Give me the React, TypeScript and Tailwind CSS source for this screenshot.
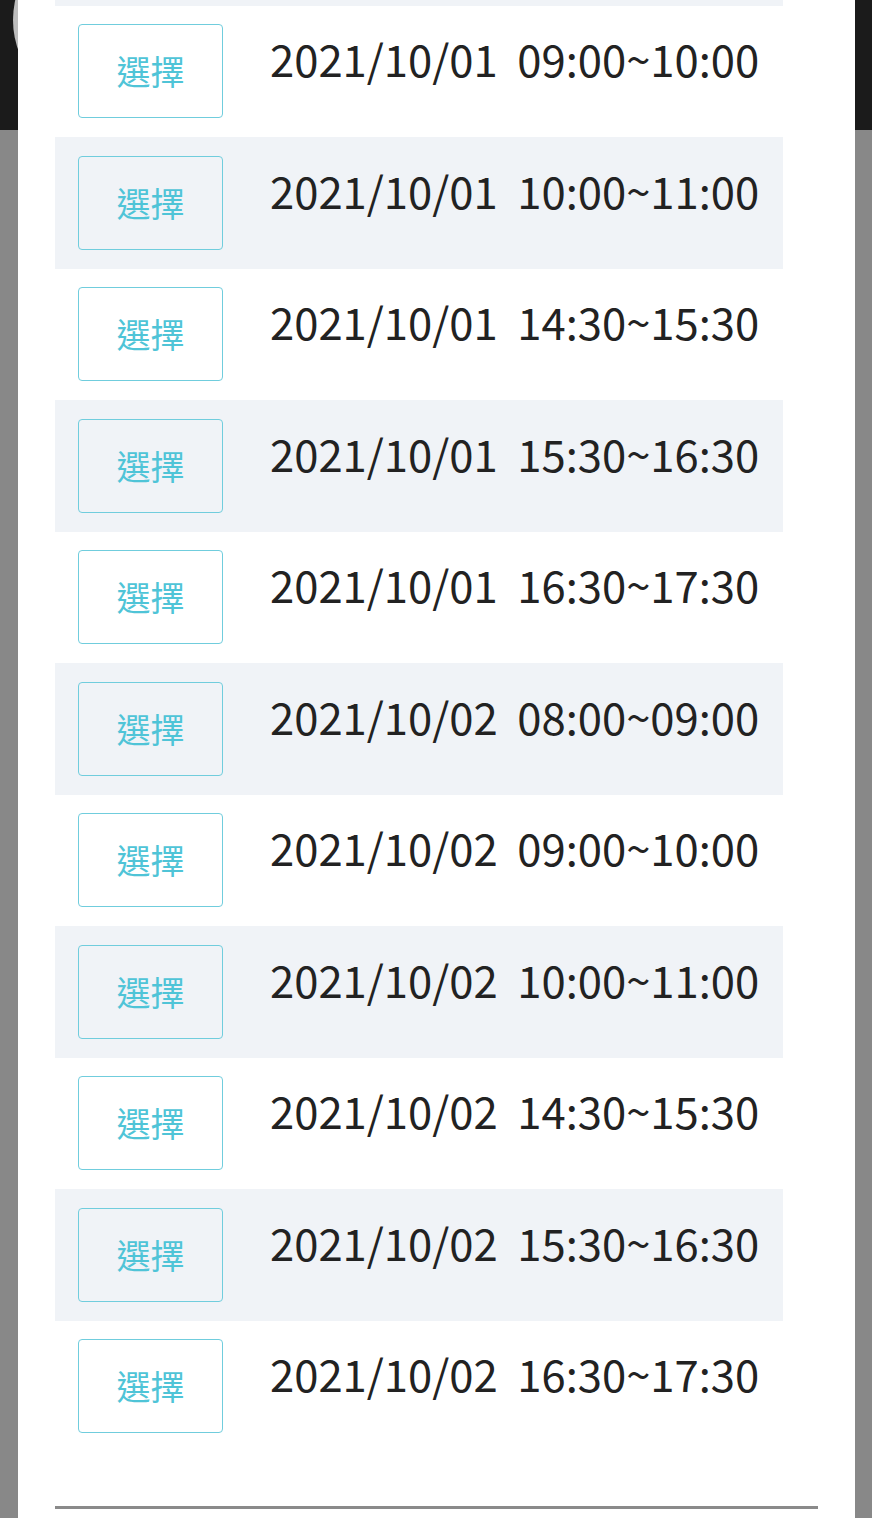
const slots = [
  "2021/10/01  09:00~10:00",
  "2021/10/01  10:00~11:00",
  "2021/10/01  14:30~15:30",
  "2021/10/01  15:30~16:30",
  "2021/10/01  16:30~17:30",
  "2021/10/02  08:00~09:00",
  "2021/10/02  09:00~10:00",
  "2021/10/02  10:00~11:00",
  "2021/10/02  14:30~15:30",
  "2021/10/02  15:30~16:30",
  "2021/10/02  16:30~17:30",
];

const SlotRow = ({ label, shaded }: { label: string; shaded: boolean }) => (
  <li className={`flex items-start h-[131.5px] pt-[18.5px] pl-[23px] ${shaded ? "bg-[#f0f3f7]" : "bg-white"}`}>
    <button
      type="button"
      className="w-[145px] h-[94px] shrink-0 flex items-center justify-center rounded-[4px] border-[1.5px] border-[#70cddd] text-[34px] text-[#4fc4d7] leading-none"
    >
      選擇
    </button>
    <span className="ml-[47px] mt-[2px] whitespace-pre text-[43.6px] text-[#222222]">{label}</span>
  </li>
);

export default function App() {
  return (
    <div
      className="relative w-[872px] h-[1518px] overflow-hidden bg-[#888888]"
      style={{ fontFamily: '"Noto Sans CJK TC", "Noto Sans", sans-serif' }}
    >
      {/* header behind the overlay */}
      <div className="h-[130px] bg-[#1b1b1b]" />
      <div className="absolute left-[13px] top-[-70px] w-[220px] h-[180px] rounded-full bg-[#bdbdbd]" />

      {/* modal */}
      <div className="absolute left-[18px] top-0 w-[837px] h-[1518px] bg-white pl-[37px]">
        <div className="h-[5.5px] w-[728px] bg-[#f0f3f7]" />
        <ul className="w-[728px]">
          {slots.map((s, i) => (
            <SlotRow key={s} label={s} shaded={i % 2 === 1} />
          ))}
        </ul>
        <div className="mt-[53.5px] h-[3px] w-[763px] bg-[#8a8a8a]" />
      </div>
    </div>
  );
}
